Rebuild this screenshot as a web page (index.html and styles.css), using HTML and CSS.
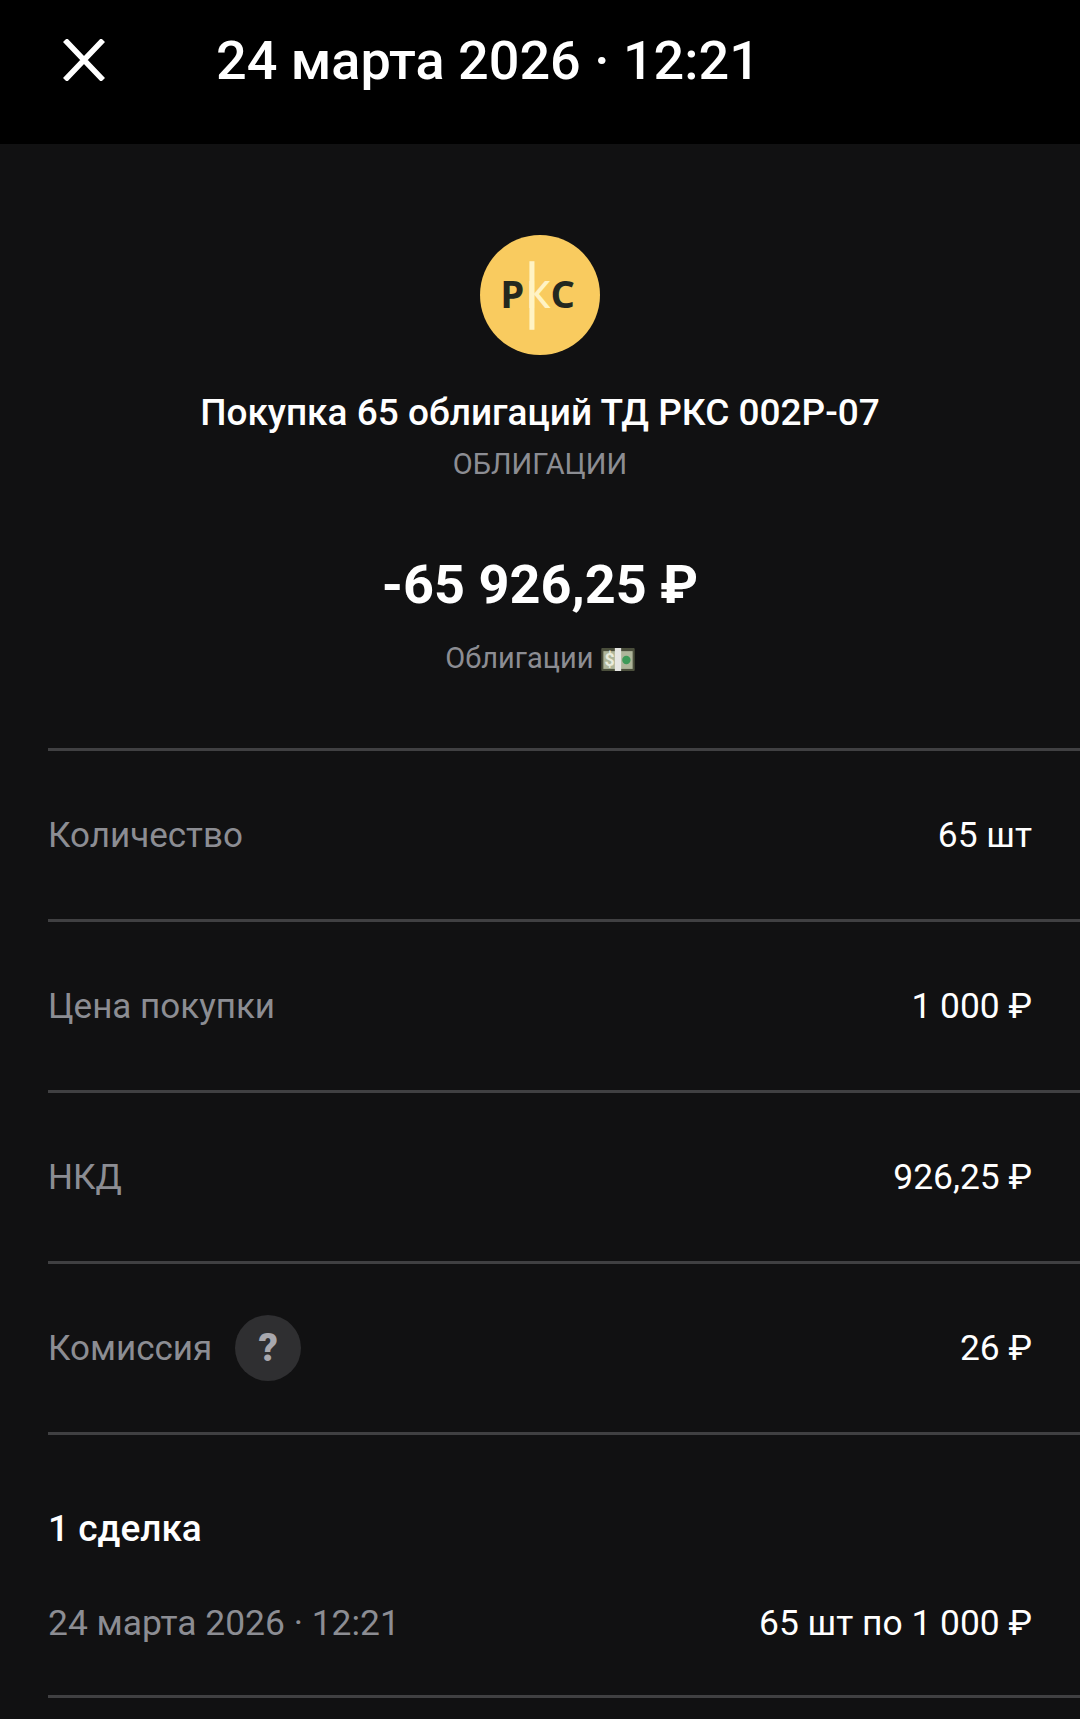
FILE: index.html
```html
<!DOCTYPE html>
<html lang="ru">
<head>
    <meta charset="UTF-8">
    <title>Покупка облигаций</title>
    <link rel="stylesheet" href="styles.css">
</head>
<body>
    <header class="topbar">
        <svg class="close-icon" width="42" height="42" viewBox="0 0 42 42">
            <path d="M2 1 L40 41 M40 1 L2 41" stroke="#fff" stroke-width="5.5" fill="none"/>
        </svg>
        <div class="topbar-title">24 марта 2026 · 12:21</div>
    </header>
    <main class="content">
        <section class="summary">
            <svg class="logo" width="120" height="120" viewBox="0 0 119 119">
                <circle cx="59.5" cy="59.5" r="59.5" fill="#f9cb5f"/>
                <text class="logo-text" x="20" y="72">Р</text>
                <text class="logo-text logo-k" x="45.5" y="72">К</text>
                <text class="logo-text" x="70" y="72">С</text>
                <rect x="49" y="26" width="5" height="68" fill="#fff3c4"/>
            </svg>
            <div class="title">Покупка 65 облигаций ТД РКС 002Р-07</div>
            <div class="subtitle">ОБЛИГАЦИИ</div>
            <div class="amount">-65 926,25 ₽</div>
            <div class="note">Облигации
                <svg class="money" width="34" height="23" viewBox="0 0 32 22">
                    <rect x="0" y="0" width="32" height="22" rx="1" fill="#4b4f3c"/>
                    <rect x="2" y="3" width="28" height="17" fill="#aeb59a"/>
                    <text class="money-sign" x="3" y="17">$</text>
                    <circle cx="24" cy="11.5" r="4" fill="#3d9a58"/>
                    <rect x="13" y="0" width="6" height="22" fill="#e6e6e3"/>
                </svg>
            </div>
        </section>

        <div class="row">
            <span class="row-label">Количество</span>
            <span class="row-value">65 шт</span>
        </div>
        <div class="row">
            <span class="row-label">Цена покупки</span>
            <span class="row-value">1 000 ₽</span>
        </div>
        <div class="row">
            <span class="row-label">НКД</span>
            <span class="row-value">926,25 ₽</span>
        </div>
        <div class="row">
            <span class="row-label">Комиссия <span class="help">?</span></span>
            <span class="row-value">26 ₽</span>
        </div>

        <h3 class="deals-title">1 сделка</h3>
        <div class="row deal-row">
            <span class="row-label">24 марта 2026 · 12:21</span>
            <span class="row-value">65 шт по 1 000 ₽</span>
        </div>
    </main>
</body>
</html>
```

FILE: styles.css
```css
html, body {
    margin: 0;
    padding: 0;
    background: #111112;
}
body {
    font-family: Roboto, "Noto Sans", sans-serif;
    color: #fff;
    height: 1719px;
    overflow: hidden;
}
.topbar {
    background: #000;
    height: 144px;
    display: flex;
    align-items: center;
    padding: 0 0 24px 63px;
    box-sizing: border-box;
}
.close-icon {
    flex: none;
}
.topbar-title {
    font-size: 54px;
    font-weight: 500;
    margin-left: 111px;
}
.content {
    padding-left: 48px;
}
.summary {
    display: flex;
    flex-direction: column;
    align-items: center;
    padding: 91px 48px 0 0;
    height: 604px;
    box-sizing: border-box;
}
.logo {
    display: block;
    flex: none;
}
.logo-text {
    font-family: "Open Sans", sans-serif;
    font-size: 38px;
    font-weight: 700;
    fill: #23281f;
}
.logo-k {
    fill: #fff3c4;
    font-weight: 600;
}
.money-sign {
    font-size: 17px;
    font-weight: 700;
    fill: #e8ebdc;
}
.title {
    font-size: 37px;
    font-weight: 500;
    margin-top: 36px;
    line-height: 44px;
}
.subtitle {
    color: #8c8d93;
    font-size: 29px;
    line-height: 40px;
    margin-top: 9px;
}
.amount {
    font-size: 54px;
    font-weight: 700;
    line-height: 60px;
    margin-top: 71px;
}
.note {
    color: #8c8d93;
    font-size: 29px;
    line-height: 40px;
    margin-top: 23px;
}
.money {
    vertical-align: -3px;
}
.row {
    display: flex;
    justify-content: space-between;
    align-items: center;
    height: 171px;
    padding-right: 48px;
    border-top: 3px solid #404042;
    box-sizing: border-box;
    font-size: 35px;
}
.row-label {
    color: #8c8d93;
    display: flex;
    align-items: center;
    gap: 23px;
}
.help {
    width: 66px;
    height: 66px;
    border-radius: 50%;
    background: #2f2f31;
    color: #a8a8ae;
    font-size: 38px;
    font-weight: 900;
    display: flex;
    align-items: center;
    justify-content: center;
}
.row-value {
    color: #fff;
    font-size: 35.4px;
}
.deals-title {
    font-size: 37px;
    font-weight: 500;
    line-height: 44px;
    margin: 0;
    border-top: 3px solid #404042;
    padding-top: 72px;
}
.deal-row {
    height: 147px;
    border-top: 0;
    border-bottom: 3px solid #404042;
    font-size: 35.4px;
}
```
